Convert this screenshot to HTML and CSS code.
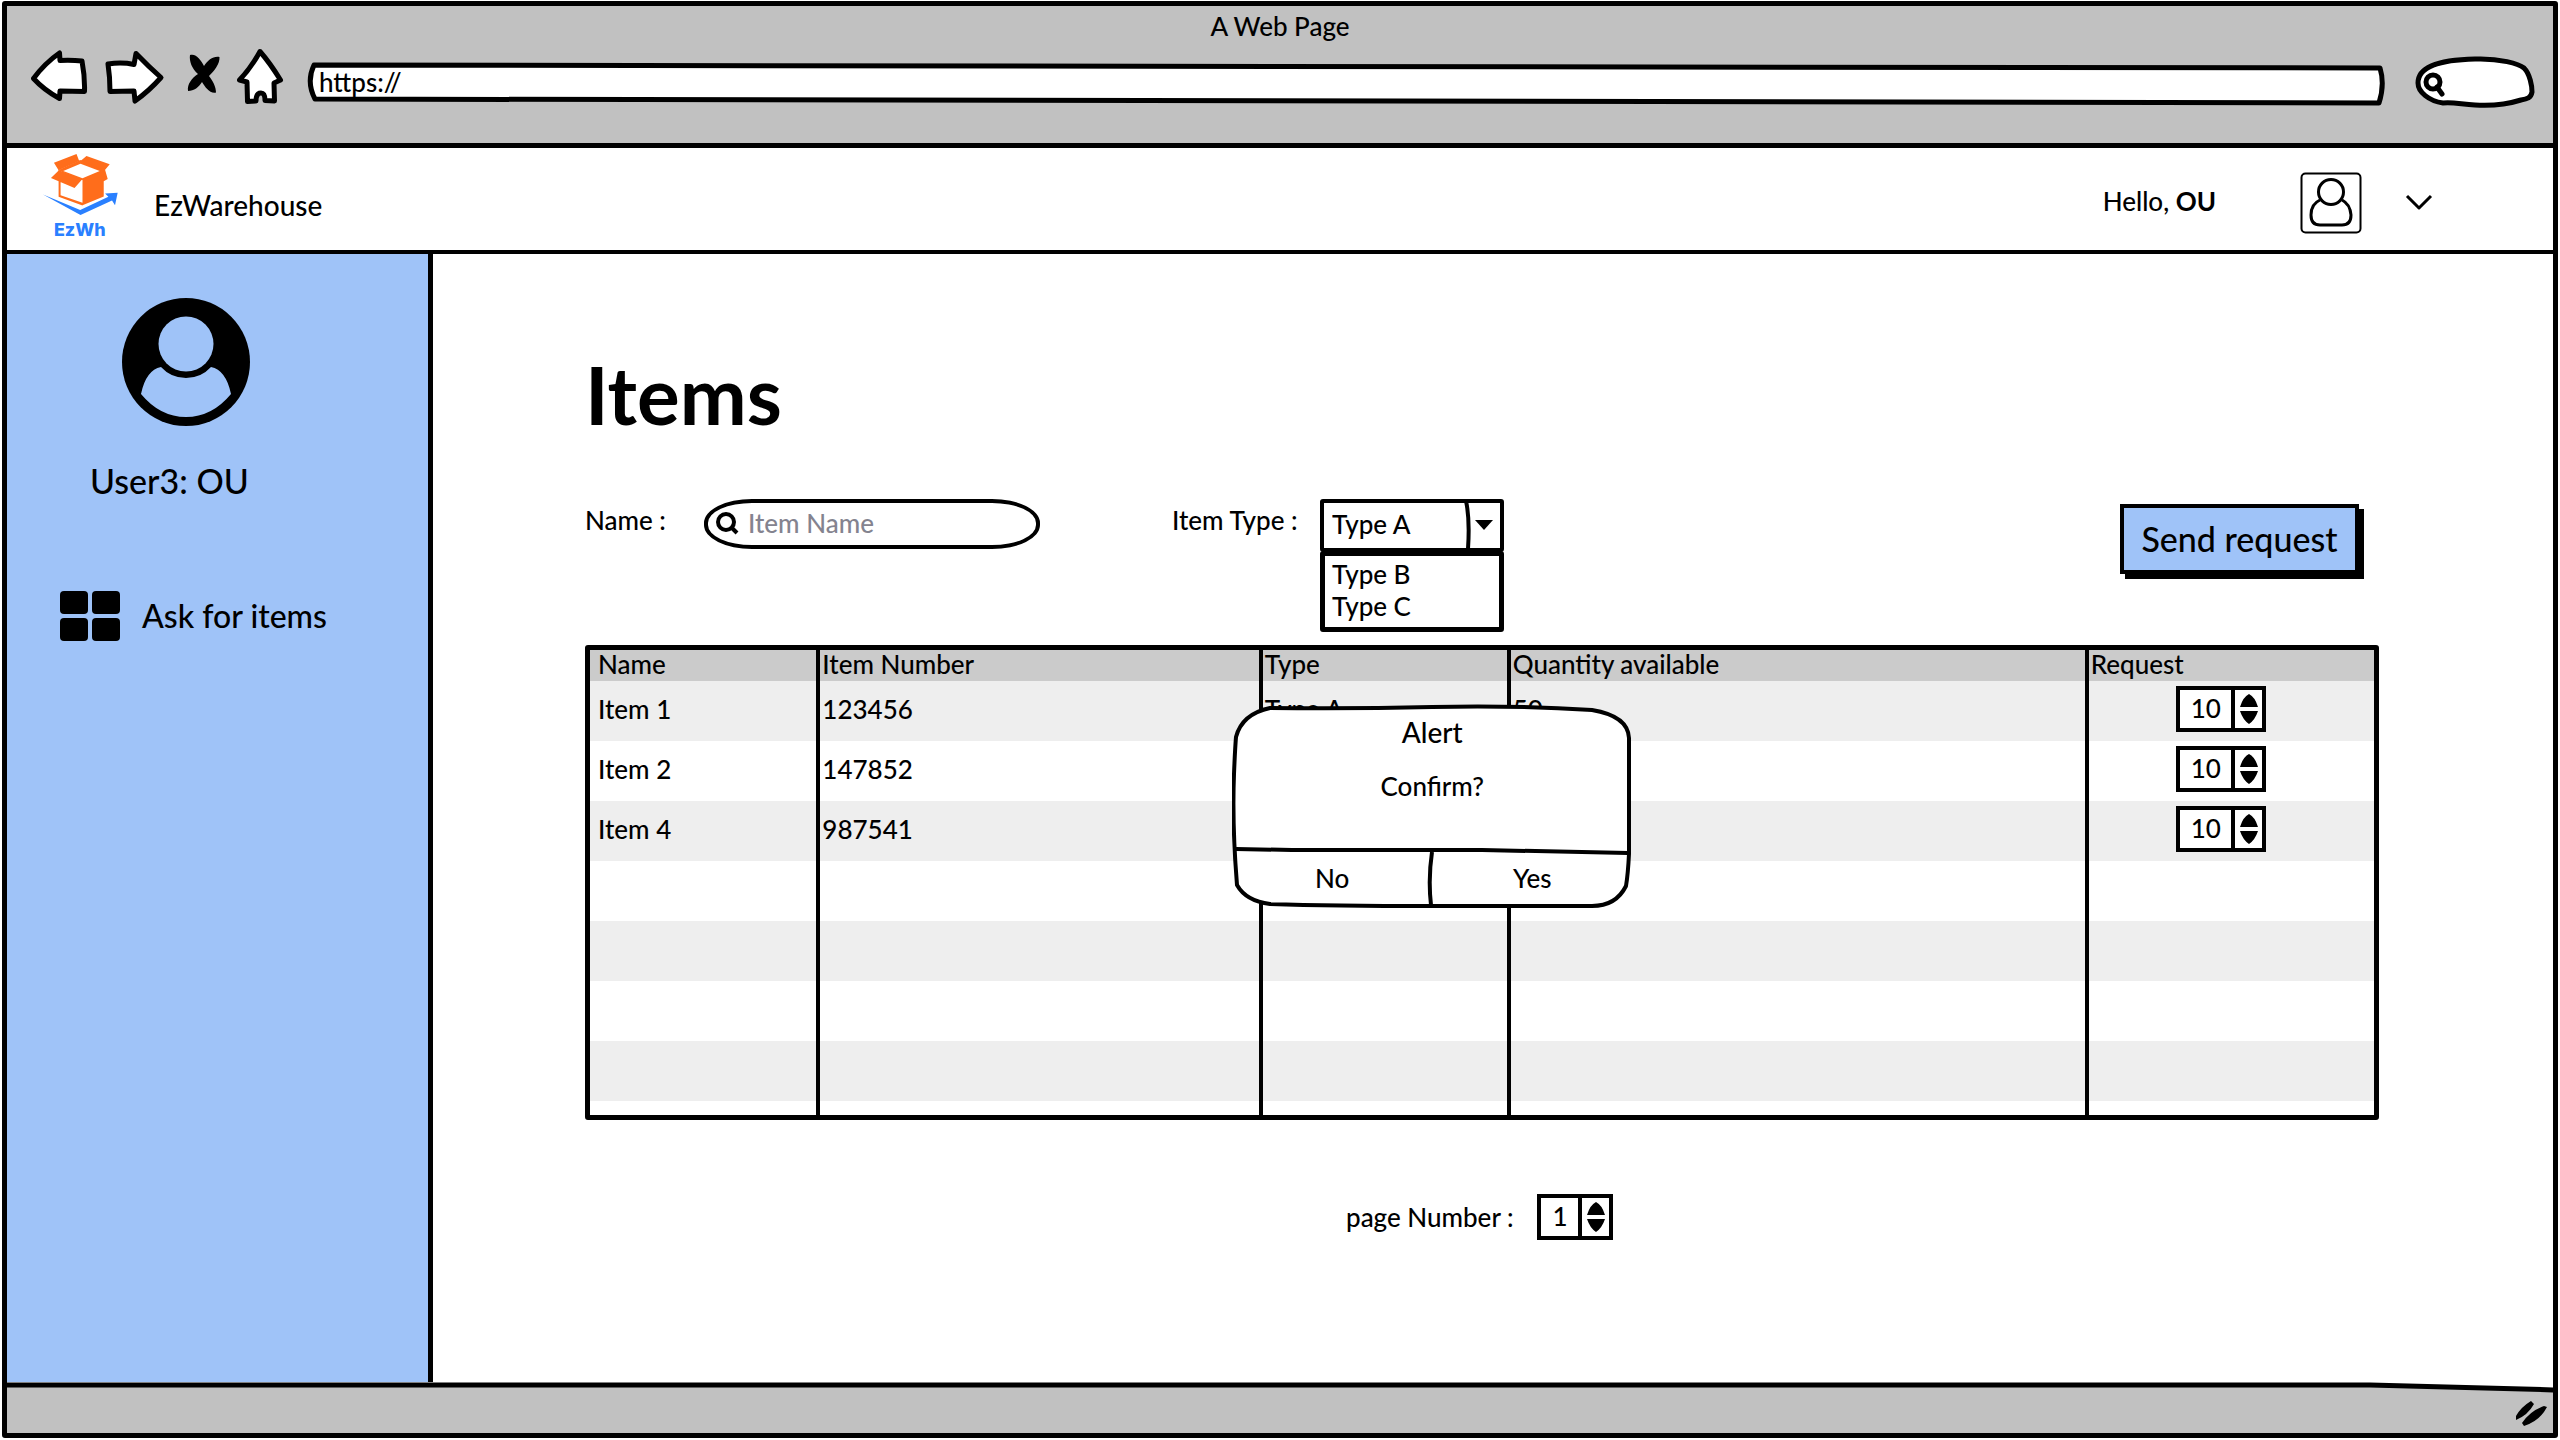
FILE: index.html
```html
<!DOCTYPE html>
<html lang="en">
<head>
<meta charset="utf-8">
<meta name="viewport" content="width=device-width, initial-scale=1">
<title>EzWarehouse - Items</title>
<link rel="stylesheet" href="styles.css">
</head>
<body>
<div class="window">
  <header class="chrome">
    <div class="chrome-title">A Web Page</div>
    <div class="chrome-bar">
      <button class="tool" aria-label="Back"><svg width="60" height="60" viewBox="31 43 60 60"><path class="ink-white" d="M33.500 75.500Q45 60 59.500 50L60 57.500Q72 57 82 58Q85 74 84.500 88.500L60 88L59.500 95.500Q44 87 33.500 75.500Z"/></svg></button>
      <button class="tool" aria-label="Forward"><svg width="66" height="60" viewBox="105 43 66 60"><path class="ink-white" d="M108 61Q122 59 134 61.500L136 50.500Q148 63 161 74.500Q149 88 135 98L134 88L110 88.500Q110 74 108 61Z"/></svg></button>
      <button class="tool" aria-label="Stop"><svg width="38" height="60" viewBox="185 43 38 60"><path d="M190 52C196 50 201 57 204 63C208 57 213 53 219.500 54C220 61 214 68 209 73C213 78 216 84 216 89.500C210 91 205 84 202 79C199 84 194 88 188 88C187 81 192 75 198 71C192 66 189 58 190 52Z"/></svg></button>
      <button class="tool" aria-label="Home"><svg width="56" height="60" viewBox="237 43 56 60"><path class="ink-white" d="M260 48.500Q270 60 280.500 77L274 80L274.500 98L265 97.500Q265 90 261 90Q256 90 256 98L247.500 98.500L247 79L239.500 77Q251 65 260 48.500Z"/></svg></button>
      <label class="sketch url">
        <svg viewBox="0 0 2079 44" preserveAspectRatio="none" aria-hidden="true"><path class="ink-white" d="M7 3L2073 6Q2078 22 2072 41L8 37Q-1 20 7 3Z"/></svg>
        <input type="text" value="https://" aria-label="Address">
      </label>
      <label class="sketch quick">
        <svg viewBox="0 0 120 52" aria-hidden="true"><path class="ink-white" d="M3 27C3 12 20 4 60 3C85 2 104 8 109 12C115 18 117 30 117 36C116 42 112 43 106 44C90 49 75 50 60 49C45 48 38 46 28 47C14 45 3 36 3 27Z"/><circle class="ink" cx="18" cy="26" r="7"/><path class="ink" d="M22 31L27 38"/></svg>
        <input type="search" aria-label="Web search">
      </label>
    </div>
  </header>

  <div class="topbar">
    <svg class="logo" width="75" height="92" viewBox="135 465 226 277" role="img" aria-label="EzWh logo">
      <g fill="#ff6d1b"><path d="M168 494L236 468L244 489L182 517ZM248 489L266 474L336 499L318 521ZM159 540L183 517L254 543L230 570ZM254 543L322 515L330 543L318 550V596L254 622ZM182 545L188 550V592L254 615V623L182 597Z"/><path fill-rule="evenodd" d="M180 517L247 486L322 518L254 546ZM196 519L254 541L306 519L248 497Z"/></g>
      <path fill="#2a80ff" d="M135 590L247 637L332 597L322 587L360 585L352 622L343 608L248 652Z"/>
      <text class="logo-text" x="168" y="714">EzWh</text>
    </svg>
    <span class="brand">EzWarehouse</span>
    <span class="hello">Hello, <b>OU</b></span>
    <button class="profile" aria-label="Profile"><svg width="62" height="62" viewBox="0 0 62 62"><rect class="line" x="1.500" y="1.500" width="59" height="59" rx="4"/><path class="line3" d="M20 28Q11 32 11 43Q11 53 20 53H42Q51 53 51 43Q50 32 42 28"/><circle class="line3" cx="31" cy="20" r="12.500"/></svg></button>
    <button class="more" aria-label="Open menu"><svg width="28" height="18" viewBox="0 0 28 18"><path class="line3" d="M2 2L14 14L26 2"/></svg></button>
  </div>

  <div class="body">
    <nav class="sidebar">
      <svg class="avatar" width="128" height="128" viewBox="0 0 128 128" aria-hidden="true"><circle cx="64" cy="64" r="64"/><circle class="cut" cx="64" cy="46" r="27.500"/><path class="cut" d="M39 69Q24 72 19 96Q38 119 64 119Q90 119 109 96Q104 72 89 69Q79 80 64 80Q49 80 39 69Z"/></svg>
      <p class="user">User3: OU</p>
      <a class="side-link" href="#">
        <svg width="60" height="50" viewBox="0 0 60 50" aria-hidden="true"><rect width="28" height="23" rx="4"/><rect x="32" width="28" height="23" rx="4"/><rect y="27" width="28" height="23" rx="4"/><rect x="32" y="27" width="28" height="23" rx="4"/></svg>
        Ask for items
      </a>
    </nav>

    <main class="main">
      <h1>Items</h1>
      <form class="filters">
        <label class="name-label" for="name">Name :</label>
        <div class="search-box">
          <svg width="24" height="24" viewBox="0 0 24 24" aria-hidden="true"><circle class="line4" cx="10" cy="10" r="8"/><path class="line4" d="M16 16L21 21"/></svg>
          <input id="name" type="text" placeholder="Item Name">
        </div>
        <label class="type-label" for="type">Item Type :</label>
        <div class="picker">
          <select id="type"><option>Type A</option><option>Type B</option><option>Type C</option></select>
          <svg class="picker-arrow" viewBox="0 0 41 52" aria-hidden="true"><path class="line4" d="M3 2Q7 20 5 50"/><path d="M12 21H30L21 31Z"/></svg>
          <ul class="picker-list"><li>Type B</li><li>Type C</li></ul>
        </div>
        <button class="send" type="button">Send request</button>
      </form>

      <div class="table-area">
        <table>
          <colgroup><col class="c1"><col class="c2"><col class="c3"><col class="c4"><col></colgroup>
          <thead><tr><th>Name</th><th>Item Number</th><th>Type</th><th>Quantity available</th><th>Request</th></tr></thead>
          <tbody>
            <tr><td>Item 1</td><td>123456</td><td>Type A</td><td>50</td><td><span class="stepper"><input type="text" inputmode="numeric" value="10" aria-label="Request for Item 1"><button aria-label="Change amount"><svg width="18" height="30" viewBox="0 0 18 30"><path d="M0 13Q3 3 9 0Q15 3 18 13ZM0 17H18Q15 26 9 30Q3 26 0 17Z"/></svg></button></span></td></tr>
            <tr><td>Item 2</td><td>147852</td><td></td><td></td><td><span class="stepper"><input type="text" inputmode="numeric" value="10" aria-label="Request for Item 2"><button aria-label="Change amount"><svg width="18" height="30" viewBox="0 0 18 30"><path d="M0 13Q3 3 9 0Q15 3 18 13ZM0 17H18Q15 26 9 30Q3 26 0 17Z"/></svg></button></span></td></tr>
            <tr><td>Item 4</td><td>987541</td><td></td><td></td><td><span class="stepper"><input type="text" inputmode="numeric" value="10" aria-label="Request for Item 4"><button aria-label="Change amount"><svg width="18" height="30" viewBox="0 0 18 30"><path d="M0 13Q3 3 9 0Q15 3 18 13ZM0 17H18Q15 26 9 30Q3 26 0 17Z"/></svg></button></span></td></tr>
            <tr><td></td><td></td><td></td><td></td><td></td></tr>
            <tr><td></td><td></td><td></td><td></td><td></td></tr>
            <tr><td></td><td></td><td></td><td></td><td></td></tr>
            <tr><td></td><td></td><td></td><td></td><td></td></tr>
            <tr class="rest"><td></td><td></td><td></td><td></td><td></td></tr>
          </tbody>
        </table>

        <div class="sketch alert" role="alertdialog" aria-labelledby="alert-title">
          <svg viewBox="0 0 400 204" aria-hidden="true"><path class="line4 fill-white" d="M38 4Q120 5 200 3Q280 1 360 6Q396 12 397 34V150Q396 170 394 182Q384 202 360 202H200Q100 202 38 200Q14 197 5 181Q0 120 2 70Q3 45 4 33Q10 10 38 4Z"/><path class="line4" d="M4 145L60 146H250L396 149M200 148Q196 175 199 201"/></svg>
          <div class="alert-content">
            <h2 id="alert-title">Alert</h2>
            <p>Confirm?</p>
            <div class="alert-actions"><button>No</button><button>Yes</button></div>
          </div>
        </div>
      </div>

      <div class="pager">
        <label for="page">page Number :</label>
        <span class="stepper small"><input id="page" type="text" inputmode="numeric" value="1"><button aria-label="Change page"><svg width="18" height="30" viewBox="0 0 18 30"><path d="M0 13Q3 3 9 0Q15 3 18 13ZM0 17H18Q15 26 9 30Q3 26 0 17Z"/></svg></button></span>
      </div>
    </main>
  </div>

  <footer class="sketch status">
    <svg viewBox="0 0 2546 51" preserveAspectRatio="none" aria-hidden="true"><path fill="#c1c1c1" d="M0 3H2363L2546 8V51H0Z"/><path class="ink" d="M-4 3H2363L2550 8"/></svg>
    <svg class="grip" width="32" height="26" viewBox="0 0 32 26" aria-hidden="true"><path d="M15 0Q5 6 0 15V19Q12 14 18 3ZM28 5Q14 10 6 22L8 25Q24 20 31 6Z"/></svg>
  </footer>
</div>
</body>
</html>
```
FILE: styles.css
```css
* { box-sizing: border-box; }

body {
  margin: 0;
  padding: 1px 2px 2px;
  background: #fff;
  color: #000;
  font: 500 26px/32px Lato, "Open Sans", sans-serif;
}

button, input, select {
  font: inherit;
  color: inherit;
  margin: 0;
  padding: 0;
  border: 0;
  background: none;
  border-radius: 0;
  appearance: none;
  outline: 0;
}

h1, h2, p, ul { margin: 0; padding: 0; font-weight: inherit; }
ul { list-style: none; }
svg { display: block; }

/* Hand-drawn strokes */
.ink, .ink-white { stroke: #000; stroke-width: 5px; stroke-linecap: round; stroke-linejoin: round; vector-effect: non-scaling-stroke; }
.ink, .line, .line3, .line4 { fill: none; }
.ink-white { fill: #fff; }
.line, .line3, .line4 { stroke: #000; stroke-width: 2px; stroke-linejoin: round; }
.line3 { stroke-width: 3px; }
.line4 { stroke-width: 4px; }
.fill-white { fill: #fff; }

/* Stacks content on top of its drawn outline */
.sketch { display: grid; }
.sketch > * { grid-area: 1 / 1; min-width: 0; }
.sketch > svg:first-child { width: 100%; height: 100%; }

.window {
  min-height: calc(100vh - 3px);
  display: flex;
  flex-direction: column;
  border: 5px solid #000;
  border-radius: 3px;
}

.chrome { height: 142px; background: #c1c1c1; border-bottom: 5px solid #000; }
.chrome-title { text-align: center; line-height: 40px; }
.chrome-bar { display: flex; align-items: flex-start; gap: 14px; padding: 0 18px 0 24px; height: 60px; }
.tool { flex: none; }
.url { flex: 1; height: 44px; margin-top: 16px; }
.url input { padding: 0 14px 4px 12px; width: 100%; }
.quick { width: 120px; height: 52px; margin: 10px 0 0 15px; }
.quick input { margin-left: 36px; width: 70px; }

.topbar { height: 106px; display: flex; align-items: center; padding: 8px 120px 0 36px; border-bottom: 4px solid #000; }
.logo { flex: none; margin-bottom: 8px; }
.logo-text { font: 800 54px Inter, sans-serif; fill: #2a80ff; }
.brand { padding: 4px 0 0 36px; font-size: 28px; }
.hello { margin: 0 0 4px auto; }
.profile { margin-left: 84px; }
.more { margin-left: 43px; }

.body { flex: 1; display: flex; }

.sidebar { flex: 0 0 426px; background: #9fc3f8; border-right: 5px solid #000; padding: 44px 0 40px 53px; font-size: 32px; line-height: 36px; }
.avatar { margin-left: 62px; }
.cut { fill: #9fc3f8; }
.user { padding: 37px 0 0 30px; font-size: 34px; }
.side-link { display: flex; align-items: center; gap: 22px; margin-top: 92px; color: #000; text-decoration: none; }

.main { flex: 1; padding: 92px 174px 40px 152px; }
h1 { font-size: 80px; line-height: 96px; font-weight: 700; }

.filters { display: flex; align-items: flex-start; margin-top: 57px; height: 75px; line-height: 42px; }
.name-label { width: 119px; }
.search-box { width: 336px; height: 50px; display: flex; align-items: center; gap: 8px; padding: 0 12px 0 8px; border: 4px solid #000; border-radius: 48px / 24px; }
.search-box svg { flex: none; }
.search-box input { width: 260px; padding-bottom: 3px; }
.search-box input::placeholder { color: #84838f; opacity: 1; }
.type-label { width: 148px; margin-left: 132px; }
.picker { position: relative; width: 184px; }
.picker select { width: 100%; height: 53px; border: 4px solid #000; border-radius: 3px; padding: 0 0 4px 8px; background: #fff; }
.picker-arrow { position: absolute; top: 0; right: 0; width: 41px; height: 52px; pointer-events: none; }
.picker-list { position: absolute; top: 52px; left: 0; width: 100%; height: 81px; padding: 2px 0 0 7px; border: 5px solid #000; border-radius: 3px; background: #fff; line-height: 32px; }
.send { width: 239px; height: 70px; margin: 5px 20px 0 auto; background: #9fc3f8; border: 4px solid #000; box-shadow: 5px 5px #000; font-size: 34px; }

.table-area { position: relative; margin-top: 71px; border: 5px solid #000; border-radius: 3px; }
table { width: 100%; border-collapse: collapse; table-layout: fixed; }
.c1 { width: 12.8%; }
.c2 { width: 24.8%; }
.c3 { width: 13.9%; }
.c4 { width: 32.4%; }
th, td { padding: 0 0 4px 2px; text-align: left; font-weight: inherit; }
th + th, td + td { border-left: 4px solid #000; }
th:first-child, td:first-child { padding-left: 8px; }
th { height: 31px; line-height: 26px; background: #cbcbcb; }
td { height: 60px; }
tbody tr:nth-child(odd) { background: #eee; }
td:last-child { text-align: center; padding-right: 22px; }
.rest td { height: 14px; padding: 0; }

.stepper { display: inline-flex; vertical-align: middle; width: 90px; height: 46px; border: 4px solid #000; background: #fff; }
.stepper input { flex: 1; min-width: 0; width: 0; text-align: center; padding-bottom: 2px; }
.stepper button { width: 31px; border-left: 4px solid #000; display: flex; align-items: center; justify-content: center; }
.small { width: 76px; }

.alert { position: absolute; top: 54px; left: 36%; width: 400px; height: 204px; }
.alert-content { display: grid; grid-template-rows: 56px 91px 53px; text-align: center; }
.alert h2 { font-size: 28px; line-height: 56px; }
.alert p { line-height: 52px; }
.alert-actions { display: grid; grid-template-columns: 1fr 1fr; }

.pager { display: flex; align-items: center; gap: 24px; margin: 74px 0 0 761px; }

.status { flex: none; height: 51px; }
.grip { place-self: end; margin: 0 5px 6px 0; }
```
